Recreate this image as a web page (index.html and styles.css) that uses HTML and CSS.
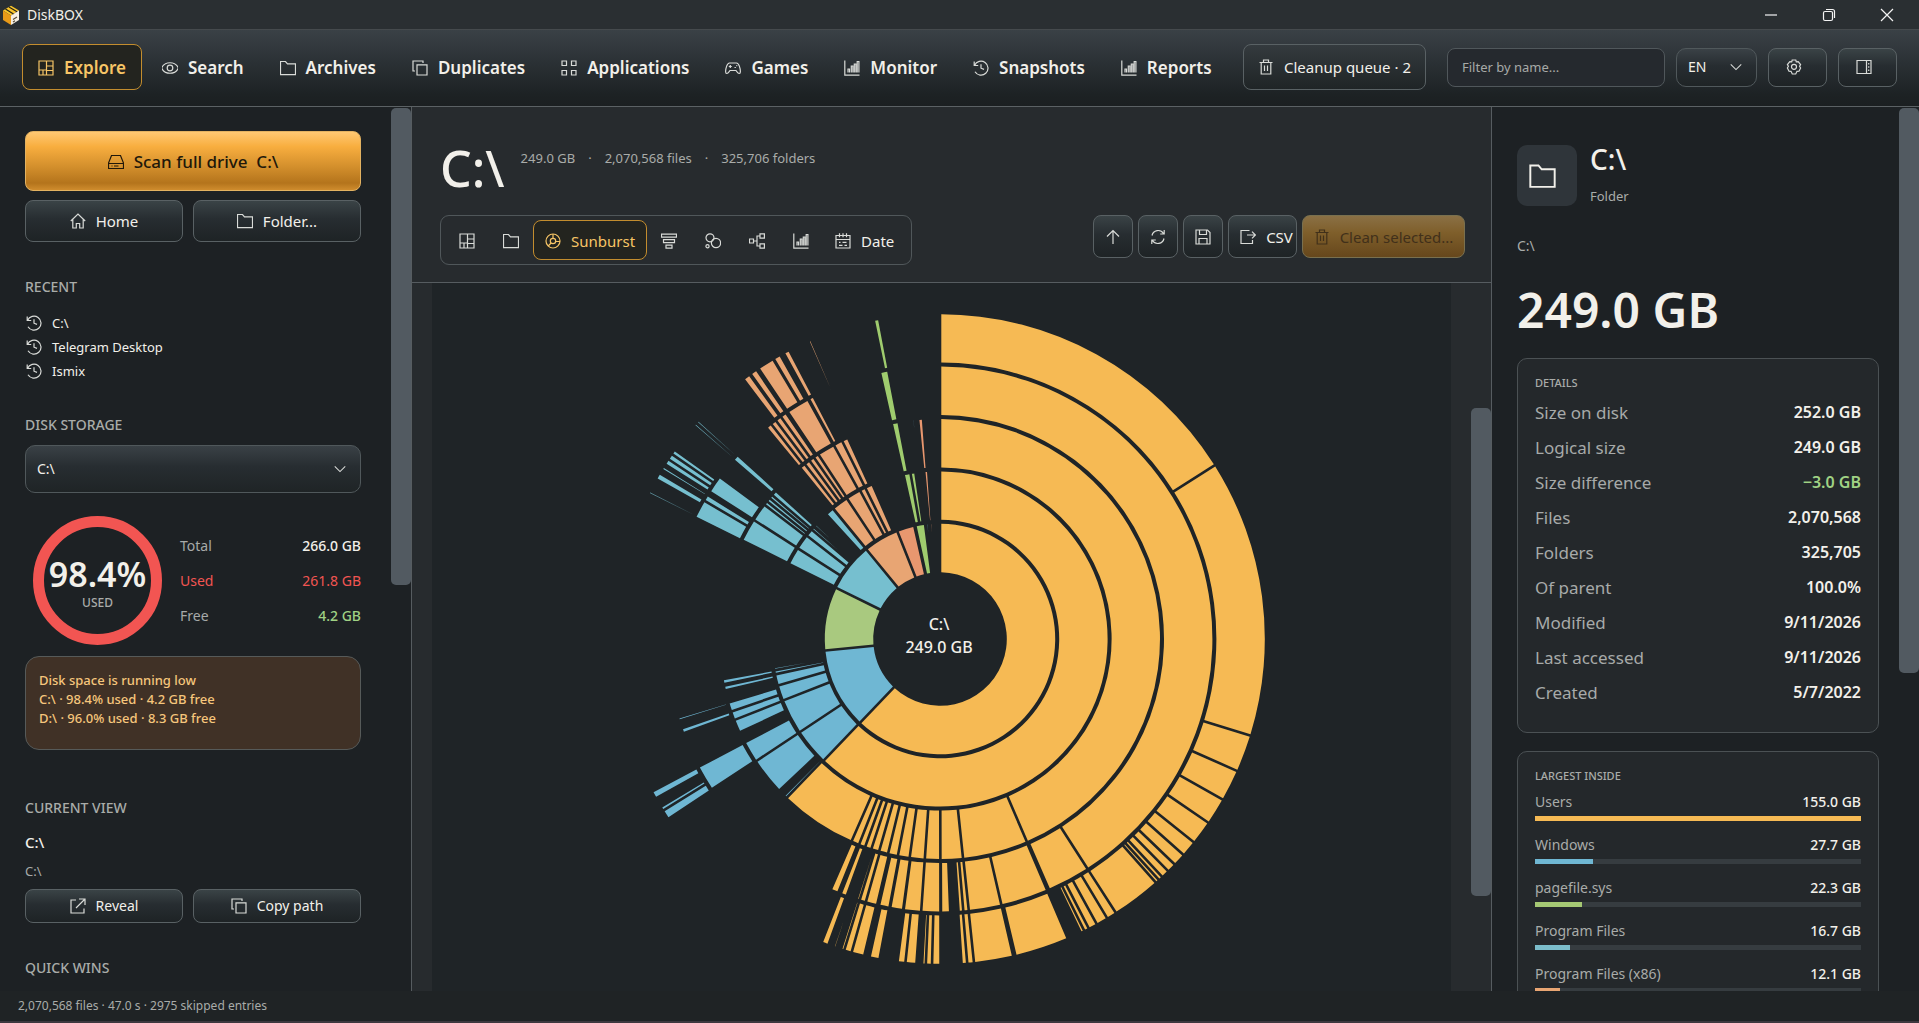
FILE: index.html
```html
<!DOCTYPE html>
<html lang="en">
<head>
<meta charset="utf-8">
<title>DiskBOX</title>
<link rel="stylesheet" href="styles.css">
<script src="sunburst.js" defer></script>
</head>
<body>
<svg class="sprite" aria-hidden="true">
  <symbol id="i-treemap" viewBox="0 0 16 16"><path d="M1 1h14v14H1zM8.500 1v14M1 10h7.500M8.500 6H15M5 10v5M8.500 10.500H15"/></symbol>
  <symbol id="i-eye" viewBox="0 0 16 16"><path d="M-.4 8C2.700 1 13.300 1 16.400 8 13.300 15 2.700 15-.4 8z"/><circle cx="8" cy="8" r="2.800"/></symbol>
  <symbol id="i-folder" viewBox="0 0 16 16"><path d="M.5 1.500h5l2 2.400h8v10.800H.5z"/></symbol>
  <symbol id="i-copy" viewBox="0 0 16 16"><path d="M5 4.800h10V15H5zM3 11H1V1h10v2"/></symbol>
  <symbol id="i-apps" viewBox="0 0 16 16"><path d="M1 1h4.500v4.500H1zM10.500 1H15v4.500h-4.500zM1 10.500h4.500V15H1zM10.500 10.500H15V15h-4.500z"/></symbol>
  <symbol id="i-game" viewBox="0 0 16 16"><path d="M4.500 3h7c2.500 0 3.800 5.500 3.900 8.500 0 2.600-2 2.600-3.400.3l-1-1.300H5l-1 1.300C2.600 14.100.6 14.100.6 11.500.7 8.500 2 3 4.500 3zM3.800 6.500h3M5.300 5v3M9.500 7.500h1.400M11.300 5.600h1"/></symbol>
  <symbol id="i-chart" viewBox="0 0 16 16"><path d="M.8.5v14.700H15.500M4 12.500V9h1.500v3.500M7.300 12.500V6h1.600v6.500M10.300 12.500V4h1.600v8.500M13.200 12.500V1.500h1.700v11"/></symbol>
  <symbol id="i-history" viewBox="0 0 16 16"><path d="M1.200 1.500v4h4M1.600 5.300A7 7 0 1 1 2 11.700M8 4.300V8.200l3 1.200"/></symbol>
  <symbol id="i-trash" viewBox="0 0 16 16"><path d="M1.500 3.500h13M5.500 3.300V1h5v2.300M3.200 3.500V15h9.600V3.500M6.500 6.500v5.500M9.500 6.500v5.500"/></symbol>
  <symbol id="i-gear" viewBox="0 0 16 16"><path d="M6.200 1h3.600l.5 1.800 1.900-.2 2.400 3-1 1.700 1 1.700-1.600 3.200-2 .1L9.700 15H6.300L5 12.300l-2-.1L1.400 9l1-1.700-1-1.700 2.400-3 1.900.2z"/><circle cx="8" cy="7.800" r="2.500"/></symbol>
  <symbol id="i-pane" viewBox="0 0 16 16"><path d="M1 1.500h14v13H1zM10.500 1.500v13M12.700 4v1.500M12.700 7.300v1.500M12.700 10.500V12"/></symbol>
  <symbol id="i-drive" viewBox="0 0 16 16"><path d="M3.500 1.500h9L15.500 9v5.500H.5V9zM.5 9.500h15M3.500 12h1M6 12h4.500"/></symbol>
  <symbol id="i-home" viewBox="0 0 16 16"><path d="M.8 8 8 1l7.200 7M2.800 6.500V15h3.500v-4.500h3.400V15h3.500V6.500"/></symbol>
  <symbol id="i-open" viewBox="0 0 16 16"><path d="M6 2H1v13h13v-4.500M9 1h6v6M15 1 6 10"/></symbol>
  <symbol id="i-sun" viewBox="0 0 16 16"><circle cx="8" cy="8" r="7"/><circle cx="8" cy="8" r="2.700"/><path d="M8 1v4.300M3.200 13l2.900-3M15 8.500h-4.300"/></symbol>
  <symbol id="i-funnel" viewBox="0 0 16 16"><path d="M.5 1.200h15v3H.5zM2.500 6.700h11v3h-11zM5 12.200h6v3H5z"/></symbol>
  <symbol id="i-bubbles" viewBox="0 0 16 16"><circle cx="5" cy="4.800" r="4"/><circle cx="11" cy="10" r="4.600"/><circle cx="2.500" cy="13.200" r="1.600"/></symbol>
  <symbol id="i-tree" viewBox="0 0 16 16"><path d="M.5 6h4v4h-4zM11 .8h4.400v4.400H11zM11 10.800h4.400v4.400H11zM4.500 8H8M11 3H8v10h3"/></symbol>
  <symbol id="i-cal" viewBox="0 0 16 16"><path d="M1 2.500h14V15H1zM1 6.500h14M4.500.2v4M8 .2v4M11.500.2v4M4 9.300h1.500M7.500 9.300h4M4 12.300h3.500M9.500 12.300H12"/></symbol>
  <symbol id="i-up" viewBox="0 0 16 16"><path d="M8 15V1.500M2 7.500l6-6 6 6"/></symbol>
  <symbol id="i-sync" viewBox="0 0 16 16"><path d="M2 6.500A6.300 6.300 0 0 1 13.500 4.500M14.200 1v4h-4M14 9.500A6.300 6.300 0 0 1 2.500 11.500M1.800 15v-4h4"/></symbol>
  <symbol id="i-save" viewBox="0 0 16 16"><path d="M1 1h11.500L15 3.500V15H1zM4.500 1v4.500h7V1M4 15V9.500h8V15"/></symbol>
  <symbol id="i-export" viewBox="0 0 16 16"><path d="M9.500 1.500H1v13h11.500V11M7 6h8.300M12 2.600 15.400 6 12 9.400"/></symbol>
  <symbol id="i-chev" viewBox="0 0 16 16"><path d="M2 5l6 6 6-6"/></symbol>
</svg>

<div class="titlebar">
  <svg class="logo" viewBox="0 0 18 20" aria-hidden="true">
    <path d="M1 5.500 9 .8l8 4.700L9 10.500z" fill="#f8c52c"/><path d="M1 5.500l8 5V20L1 15z" fill="#e99a18"/><path d="M17 5.500 9 10.500V20l8-5z" fill="#f6efe2"/>
    <path d="M3.500 4 11.500 9M7 2l8 4.800" stroke="#2a2415" stroke-width="1.200"/><path d="M11 14.500l4-2.500M11 17l2-1.300" stroke="#594a33" stroke-width="1.200"/>
  </svg>
  <span class="app-name">DiskBOX</span>
  <button class="win" aria-label="Minimize"><svg viewBox="0 0 14 14"><path d="M1 7h12"/></svg></button>
  <button class="win" aria-label="Restore"><svg viewBox="0 0 14 14"><rect x="1.500" y="3.500" width="9" height="9" rx="1.500"/><path d="M4 1.500h6.500a2 2 0 0 1 2 2V10"/></svg></button>
  <button class="win" aria-label="Close"><svg viewBox="0 0 14 14"><path d="M1 1l12 12M13 1 1 13"/></svg></button>
</div>

<header class="topbar">
  <nav class="nav">
    <a href="#" class="nav-item active"><svg class="icon"><use href="#i-treemap"/></svg>Explore</a>
    <a href="#" class="nav-item"><svg class="icon"><use href="#i-eye"/></svg>Search</a>
    <a href="#" class="nav-item"><svg class="icon"><use href="#i-folder"/></svg>Archives</a>
    <a href="#" class="nav-item"><svg class="icon"><use href="#i-copy"/></svg>Duplicates</a>
    <a href="#" class="nav-item"><svg class="icon"><use href="#i-apps"/></svg>Applications</a>
    <a href="#" class="nav-item"><svg class="icon"><use href="#i-game"/></svg>Games</a>
    <a href="#" class="nav-item"><svg class="icon"><use href="#i-chart"/></svg>Monitor</a>
    <a href="#" class="nav-item"><svg class="icon"><use href="#i-history"/></svg>Snapshots</a>
    <a href="#" class="nav-item"><svg class="icon"><use href="#i-chart"/></svg>Reports</a>
  </nav>
  <div class="tools">
    <button class="btn queue"><svg class="icon"><use href="#i-trash"/></svg>Cleanup queue · 2</button>
    <input class="filter" type="text" placeholder="Filter by name..." aria-label="Filter by name">
    <div class="select lang"><select aria-label="Language"><option>EN</option></select><svg class="icon chev"><use href="#i-chev"/></svg></div>
    <button class="btn square" aria-label="Settings"><svg class="icon"><use href="#i-gear"/></svg></button>
    <button class="btn square" aria-label="Toggle details"><svg class="icon"><use href="#i-pane"/></svg></button>
  </div>
</header>

<main class="main">
  <aside class="sidebar">
    <div class="side-content">
      <button class="scan"><svg class="icon"><use href="#i-drive"/></svg>Scan full drive&nbsp; C:\</button>
      <div class="pair">
        <button class="btn"><svg class="icon"><use href="#i-home"/></svg>Home</button>
        <button class="btn"><svg class="icon"><use href="#i-folder"/></svg>Folder...</button>
      </div>
      <h2 class="label recent-label">RECENT</h2>
      <ul class="recent">
        <li><svg class="icon"><use href="#i-history"/></svg>C:\</li>
        <li><svg class="icon"><use href="#i-history"/></svg>Telegram Desktop</li>
        <li><svg class="icon"><use href="#i-history"/></svg>Ismix</li>
      </ul>
      <h2 class="label disk-label">DISK STORAGE</h2>
      <div class="select drive"><select aria-label="Drive"><option>C:\</option></select><svg class="icon chev"><use href="#i-chev"/></svg></div>
      <div class="storage">
        <div class="donut"><b>98.4%</b><span>USED</span></div>
        <dl class="usage">
          <div><dt>Total</dt><dd>266.0 GB</dd></div>
          <div class="used"><dt>Used</dt><dd>261.8 GB</dd></div>
          <div class="free"><dt>Free</dt><dd>4.2 GB</dd></div>
        </dl>
      </div>
      <div class="warning">Disk space is running low<br>C:\ · 98.4% used · 4.2 GB free<br>D:\ · 96.0% used · 8.3 GB free</div>
      <h2 class="label view-label">CURRENT VIEW</h2>
      <p class="view-name">C:\</p>
      <p class="view-path">C:\</p>
      <div class="pair small">
        <button class="btn"><svg class="icon"><use href="#i-open"/></svg>Reveal</button>
        <button class="btn"><svg class="icon"><use href="#i-copy"/></svg>Copy path</button>
      </div>
      <h2 class="label wins-label">QUICK WINS</h2>
    </div>
    <div class="scroll"><i class="thumb side-thumb"></i></div>
  </aside>

  <section class="center">
    <div class="center-head">
      <div class="title-row">
        <h1>C:\</h1>
        <p class="meta"><span>249.0 GB</span><span>·</span><span>2,070,568 files</span><span>·</span><span>325,706 folders</span></p>
      </div>
      <div class="tool-row">
        <div class="tabs">
          <button class="tab" aria-label="Treemap"><svg class="icon"><use href="#i-treemap"/></svg></button>
          <button class="tab" aria-label="Folders"><svg class="icon"><use href="#i-folder"/></svg></button>
          <button class="tab wide active"><svg class="icon"><use href="#i-sun"/></svg>Sunburst</button>
          <button class="tab" aria-label="Icicle"><svg class="icon"><use href="#i-funnel"/></svg></button>
          <button class="tab" aria-label="Bubbles"><svg class="icon"><use href="#i-bubbles"/></svg></button>
          <button class="tab" aria-label="Tree"><svg class="icon"><use href="#i-tree"/></svg></button>
          <button class="tab" aria-label="Chart"><svg class="icon"><use href="#i-chart"/></svg></button>
          <button class="tab wide"><svg class="icon"><use href="#i-cal"/></svg>Date</button>
        </div>
        <div class="actions">
          <button class="btn act" aria-label="Up"><svg class="icon"><use href="#i-up"/></svg></button>
          <button class="btn act" aria-label="Refresh"><svg class="icon"><use href="#i-sync"/></svg></button>
          <button class="btn act" aria-label="Save"><svg class="icon"><use href="#i-save"/></svg></button>
          <button class="btn act csv"><svg class="icon"><use href="#i-export"/></svg>CSV</button>
          <button class="clean" disabled><svg class="icon"><use href="#i-trash"/></svg>Clean selected...</button>
        </div>
      </div>
    </div>
    <div class="center-body">
      <div class="canvas">
        <svg class="sunburst" viewBox="-330 -330 660 660" role="img" aria-label="Sunburst of C:\">
          <g id="rings"></g>
          <text x="-1" y="-9">C:\</text>
          <text x="-1" y="14">249.0 GB</text>
        </svg>
      </div>
      <div class="scroll"><i class="thumb center-thumb"></i></div>
    </div>
  </section>

  <aside class="details">
    <div class="detail-content">
      <div class="item-head">
        <div class="tile"><svg class="icon"><use href="#i-folder"/></svg></div>
        <div><h2 class="item-name">C:\</h2><p class="item-kind">Folder</p></div>
      </div>
      <p class="item-path">C:\</p>
      <p class="item-size">249.0 GB</p>
      <section class="card">
        <h3>DETAILS</h3>
        <dl class="facts">
          <div><dt>Size on disk</dt><dd>252.0 GB</dd></div>
          <div><dt>Logical size</dt><dd>249.0 GB</dd></div>
          <div class="free"><dt>Size difference</dt><dd>−3.0 GB</dd></div>
          <div><dt>Files</dt><dd>2,070,568</dd></div>
          <div><dt>Folders</dt><dd>325,705</dd></div>
          <div><dt>Of parent</dt><dd>100.0%</dd></div>
          <div><dt>Modified</dt><dd>9/11/2026</dd></div>
          <div><dt>Last accessed</dt><dd>9/11/2026</dd></div>
          <div><dt>Created</dt><dd>5/7/2022</dd></div>
        </dl>
      </section>
      <section class="card">
        <h3>LARGEST INSIDE</h3>
        <ul class="largest">
          <li><span>Users</span><b>155.0 GB</b><div class="bar"><i class="amber" style="width:100%"></i></div></li>
          <li><span>Windows</span><b>27.7 GB</b><div class="bar"><i class="blue" style="width:17.9%"></i></div></li>
          <li><span>pagefile.sys</span><b>22.3 GB</b><div class="bar"><i class="green" style="width:14.4%"></i></div></li>
          <li><span>Program Files</span><b>16.7 GB</b><div class="bar"><i class="teal" style="width:10.8%"></i></div></li>
          <li><span>Program Files (x86)</span><b>12.1 GB</b><div class="bar"><i class="peach" style="width:7.8%"></i></div></li>
        </ul>
      </section>
    </div>
    <div class="scroll"><i class="thumb detail-thumb"></i></div>
  </aside>
</main>

<footer class="status">2,070,568 files · 47.0 s · 2975 skipped entries</footer>
</body>
</html>
```
FILE: styles.css
```css
* { box-sizing: border-box; margin: 0; padding: 0; }
html, body { height: 100%; }
body {
  display: flex;
  flex-direction: column;
  overflow: hidden;
  background: #1f2427;
  color: #f2f0ea;
  font: 14px/20px "Noto Sans", "Open Sans", sans-serif;
}
button, input, select { font: inherit; color: inherit; }
ul { list-style: none; }
.sprite { position: absolute; width: 0; height: 0; }
.icon {
  flex: none;
  width: 16px;
  height: 16px;
  fill: none;
  stroke: currentColor;
  stroke-width: 1.2;
  overflow: visible;
  color: #d9dbd8;
}
.active .icon, .scan .icon, .clean .icon { color: inherit; }

.titlebar { flex: none; display: flex; align-items: center; height: 29px; padding: 0 3px 0 2px; background: #2a2f32; }
.logo { width: 18px; height: 20px; }
.app-name { flex: 1; margin-left: 7px; font-size: 14px; }
.win { width: 58px; height: 28px; display: grid; place-items: center; background: none; border: 0; }
.win svg { width: 14px; height: 14px; fill: none; stroke: #f4f4f4; stroke-width: 1.2; }

.topbar {
  flex: none;
  display: flex;
  align-items: center;
  justify-content: space-between;
  height: 78px;
  padding: 0 22px;
  border-top: 1px solid #454a4d;
  border-bottom: 1px solid #5b6164;
  background: linear-gradient(#3a4146, #2a3034 45%, #1d2224 85%, #1b1f21);
}
.nav { display: flex; gap: 4px; }
.nav-item {
  display: flex;
  align-items: center;
  gap: 10px;
  height: 46px;
  padding: 2px 15px 0;
  border: 1px solid transparent;
  border-radius: 8px;
  color: #f2f0ea;
  font-size: 17px;
  font-weight: 600;
  text-decoration: none;
}
.nav-item.active { background: #23241f; border-color: #c38d2e; color: #f7c566; }
.tools { display: flex; align-items: center; gap: 11px; }
.nav, .tools { margin-top: -2px; }
.btn {
  display: flex;
  align-items: center;
  justify-content: center;
  gap: 10px;
  border: 1px solid #596164;
  border-radius: 8px;
  background: linear-gradient(#3a4346, #272d31 45%, #1e2325);
}
.queue { width: 183px; height: 46px; margin-right: 10px; font-size: 15px; background: linear-gradient(#343a3e, #1f2426); }
.filter {
  width: 218px;
  height: 39px;
  padding: 0 14px;
  border: 1px solid #50575b;
  border-radius: 8px;
  background: #25292e;
  font-size: 13px;
}
.filter::placeholder { color: #a7a9a7; opacity: 1; }
.select { position: relative; }
.select select {
  appearance: none;
  width: 100%;
  height: 100%;
  padding: 0 11px;
  border: 1px solid #50585b;
  border-radius: 10px;
  background: linear-gradient(#3a4146, #272d31 45%, #1f2426);
  font-size: 14px;
}
.chev { position: absolute; right: 14px; top: 50%; width: 14px; height: 14px; margin-top: -7px; pointer-events: none; }
.lang { width: 81px; height: 39px; }
.square { width: 59px; height: 39px; padding-right: 8px; }

.main { flex: 1; min-height: 0; display: flex; }
.scroll { flex: none; width: 20px; padding-top: 1px; }
.thumb { display: block; border-radius: 5px; background: #525a61; }

.sidebar { flex: none; width: 412px; display: flex; overflow: hidden; background: #1d2124; border-right: 1px solid #565c60; }
.side-content { flex: 1; min-width: 0; padding: 24px 30px 0 25px; }
.side-thumb { height: 54%; }
.scan {
  display: flex;
  align-items: center;
  justify-content: center;
  gap: 10px;
  width: 100%;
  height: 60px;
  padding-top: 2px;
  border: 1px solid #e3b261;
  border-radius: 8px;
  background: linear-gradient(#ffc873, #f8ae3f 25%, #d38f2c 60%, #b4741c 88%, #cf8c2d);
  color: #21180a;
  font-size: 17px;
  font-weight: 500;
}
.pair { display: grid; grid-template-columns: 158fr 168fr; gap: 10px; margin-top: 9px; }
.pair .btn { height: 42px; font-size: 15px; }
.pair.small .btn { height: 34px; font-size: 14px; }
.label { color: #a9aca9; font-size: 14px; font-weight: 500; line-height: 20px; }
.recent-label { margin-top: 35px; }
.recent { margin-top: 14px; }
.recent li { display: flex; align-items: center; gap: 10px; height: 24px; padding-left: 1px; font-size: 13px; }
.disk-label { margin-top: 32px; }
.drive { height: 48px; margin-top: 10px; }
.storage { display: flex; align-items: center; margin-top: 23px; padding-left: 8px; gap: 18px; }
.donut {
  flex: none;
  display: flex;
  flex-direction: column;
  align-items: center;
  justify-content: center;
  width: 129px;
  height: 129px;
  padding-top: 8px;
  border: 11px solid #f25552;
  border-radius: 50%;
}
.donut b { font-size: 34px; line-height: 36px; font-weight: 600; }
.donut span { color: #a9aca9; font-size: 12px; line-height: 22px; font-weight: 500; }
.usage { flex: 1; display: grid; gap: 15px; font-size: 14px; }
.usage div, .facts div { display: flex; justify-content: space-between; }
.usage dt, .facts dt { color: #a7aaa9; }
.usage dd { font-weight: 500; }
.usage .used dt, .usage .used dd { color: #f25552; font-weight: 400; }
.usage .free dd, .facts .free dd { color: #a0d284; }
.warning {
  height: 94px;
  margin-top: 11px;
  padding: 14px 13px;
  border: 1px solid #565a59;
  border-radius: 14px;
  background: #403126;
  color: #f6c67c;
  font-size: 13px;
  font-weight: 500;
  line-height: 19px;
}
.view-label { margin-top: 48px; }
.view-name { margin-top: 14px; font-size: 15px; font-weight: 500; }
.view-path { margin-top: 9px; color: #a7aaa9; font-size: 13px; }
.pair.small { margin-top: 8px; }
.wins-label { margin-top: 35px; }

.center { flex: 1; min-width: 0; display: flex; flex-direction: column; background: #272b2e; }
.center-head { flex: none; height: 176px; padding: 33px 26px 0 28px; border-bottom: 1px solid #565c60; }
.title-row { display: flex; gap: 16px; height: 75px; }
h1 { font-size: 50px; line-height: 56px; font-weight: 500; }
.meta { display: flex; gap: 13px; padding-top: 8px; color: #a9aca9; font-size: 13px; }
.tool-row { display: flex; justify-content: space-between; align-items: flex-start; }
.tabs { display: flex; align-items: center; height: 50px; padding: 0 5px 0 4px; border: 1px solid #50575a; border-radius: 9px; }
.tab { display: flex; align-items: center; justify-content: center; gap: 10px; width: 44px; height: 40px; padding-top: 2px; border: 1px solid transparent; border-radius: 8px; background: none; font-size: 15px; }
.tab.wide { width: auto; padding: 2px 11px 0; }
.tab.active { background: #23241f; border-color: #c38d2e; color: #f7c566; }
.actions { display: flex; gap: 5px; }
.act { width: 40px; height: 43px; }
.csv { width: 69px; padding-left: 8px; font-size: 15px; }
.clean {
  display: flex;
  align-items: center;
  justify-content: center;
  gap: 10px;
  width: 163px;
  height: 43px;
  border: 1px solid #79704f;
  border-radius: 8px;
  background: linear-gradient(#8a7045, #7f5f2b 40%, #66471c);
  color: #41301a;
  font-size: 15px;
}
.center-body { flex: 1; min-height: 0; display: flex; }
.canvas { flex: 1; min-width: 0; margin: 0 20px; display: flex; justify-content: center; align-items: center; padding: 4px 3px 0 0; background: #1f2427; }
.sunburst { flex: none; width: 660px; height: 660px; }
.sunburst text { fill: #f2f0ea; font-size: 16px; font-weight: 500; text-anchor: middle; }
.center-thumb { height: 69%; margin-top: 124px; }

.details { flex: none; width: 428px; display: flex; overflow: hidden; background: #1d2124; border-left: 1px solid #565c60; }
.detail-content { flex: 1; min-width: 0; padding: 38px 20px 0 25px; }
.detail-thumb { height: 64%; }
.item-head { display: flex; gap: 13px; }
.tile { display: grid; place-items: center; width: 60px; height: 61px; padding-right: 9px; border-radius: 10px; background: #2f353a; }
.tile .icon { width: 29px; height: 26px; stroke-width: 1.2; color: #f2f0ea; }
.item-name { font-size: 28px; line-height: 32px; font-weight: 500; margin-top: -2px; }
.item-kind { margin-top: 11px; color: #a9aca9; font-size: 13px; }
.item-path { margin-top: 30px; color: #a9aca9; font-size: 14px; }
.item-size { margin-top: 24px; font-size: 48px; line-height: 60px; font-weight: 600; }
.card { margin-top: 18px; padding: 14px 17px 22px; border: 1px solid #4b5154; border-radius: 10px; background: #24282b; }
.card h3 { color: #a9aca9; font-size: 11px; line-height: 20px; font-weight: 500; }
.facts { font-size: 17px; line-height: 35px; margin-top: 2px; }
.facts dd { font-weight: 600; font-size: 16px; }
.largest li { display: grid; grid-template-columns: 1fr auto; height: 43px; align-content: start; font-size: 14px; line-height: 20px; padding-top: 6px; }
.largest span { color: #a9aca9; }
.largest b { font-weight: 500; }
.bar { grid-column: 1 / 3; height: 5px; margin-top: 4px; background: #363c40; }
.bar i { display: block; height: 100%; }
.amber { background: #f6ba54; }
.blue { background: #6fb7d3; }
.green { background: #a5c873; }
.teal { background: #7bbcca; }
.peach { background: #e8a573; }

.status { flex: none; height: 32px; padding: 5px 18px; color: #a9aca9; font-size: 12px; line-height: 20px; background: #1f2325; border-bottom: 2px solid #3d383f; }
```
FILE: sunburst.js
```js
// Rings of the folder tree. Each entry: [start, end, colour], degrees clockwise from the top.
const A = "#f6ba54", B = "#6fb7d3", T = "#76bfcf", L = "#a9c97f", G = "#9fcc6e", P = "#e8a573", C = "#e8976f";

// Expands a list of dividers into adjoining segments.
const run = (color, ...stops) => stops.slice(1).map((end, i) => [stops[i], end, color]);

const rings = [
  [
    ...run(A, 0, 223.7), ...run(B, 223.7, 264.25), ...run(L, 264.25, 296.2), ...run(T, 296.2, 320.6),
    ...run(P, 320.6, 338.4), ...run(C, 338.4, 347.2), ...run(G, 347.7, 352.6),
    ...run(B, 353, 354.4), ...run(C, 354.9, 356.3),
  ],
  [
    ...run(A, 0, 223.75), ...run(B, 223.75, 236.4, 248.6, 254, 257.9, 259.3, 260.4), ...run(B, 263.3, 263.95),
    ...run(T, 296.4, 302.5, 307.8, 310.5, 311.6), ...run(T, 311.9, 312.9), ...run(T, 317.6, 320.6),
    ...run(P, 320.7, 326.5, 331.7, 333.7, 336.4), ...run(G, 347.5, 349.9, 351.6), ...run(C, 354.6, 356),
  ],
  [
    ...run(A, 0, 156.8, 174, 179.9, 183.95, 187.9, 191, 193.6, 196, 198.1, 199.8, 201.5, 203.6, 224),
    ...run(B, 224, 224.9), ...run(B, 226.65, 236.4, 242.1), ...run(B, 245, 248.5, 250.8, 253.3),
    ...run(B, 256.5, 257.8), ...run(B, 258.2, 259.5),
    ...run(T, 296.5, 302.6, 307.4, 308.5, 309.6, 310.6, 312.1),
    ...run(P, 320.75, 322.3, 323.8, 325.2, 326.6, 331.3, 333.7, 335.4),
    ...run(G, 347.35, 349.2), ...run(B, 352.7, 353.4), ...run(C, 354.3, 355.6),
  ],
  [
    ...run(A, 0, 147.3, 156.5), ...run(A, 156.9, 167, 173.95, 175.1, 176.1), ...run(A, 177.85, 179.8),
    ...run(A, 179.9, 183.95, 187.65), ...run(A, 187.75, 190.5), ...run(A, 190.65, 192.9),
    ...run(A, 193.3, 195.75, 197.1, 197.75), ...run(A, 198, 198.55), ...run(A, 199.95, 201.3), ...run(A, 201.85, 203.55),
    ...run(B, 236.6, 242.1), ...run(B, 249.8, 250.9), ...run(B, 252.6, 253.3),
    ...run(T, 296.4, 300.4, 301.8), ...run(T, 302.6, 306.35), ...run(T, 310.9, 312.3),
    ...run(P, 320.6, 321.85, 323.1, 324.4, 325.75), ...run(P, 326.15, 331.15), ...run(P, 331.35, 332.45),
    ...run(P, 336, 336.55), ...run(G, 347.3, 349.1),
  ],
  [
    ...run(A, 0, 57.7, 107.3, 113.95, 119.6, 124.4, 128.7, 131.55, 133.85, 135.5, 136.95, 137.75, 138.45, 147.3, 149.1, 151.2, 152.8, 153.7, 154.4),
    ...run(A, 156.9, 166.6), ...run(A, 167, 174, 175.2, 176.2),
    ...run(A, 179.9, 181.4, 182.5, 183.15), ...run(A, 184.15, 186.1, 187.5), ...run(A, 190.7, 192.5),
    ...run(A, 193.45, 195.75, 197.1, 197.7), ...run(A, 198.6, 199.1), ...run(A, 200.05, 201.3),
    ...run(B, 236.5, 238.2, 239), ...run(B, 240.7, 242.1),
    ...run(T, 296.5, 297.05), ...run(T, 299.4, 300.6), ...run(T, 301.35, 302), ...run(T, 302.45, 303.5, 304.6, 305.5),
    ...run(T, 310.95, 311.5), ...run(T, 311.65, 312.2),
    ...run(P, 322.9, 324.25), ...run(P, 324.45, 325.75), ...run(P, 326.15, 329.2), ...run(P, 329.3, 330.65),
    ...run(P, 331.35, 332.45), ...run(P, 336.15, 336.7), ...run(G, 348.25, 349.25),
  ],
];

const OUTER = 115.2, PITCH = 52.4, THICK = 48.4, HALF_GAP = 1.3;
const point = (r, a) => `${(r * Math.sin(a)).toFixed(2)} ${(-r * Math.cos(a)).toFixed(2)}`;

function segment(level, [start, end, color]) {
  const R = OUTER + PITCH * level;
  const a = start * Math.PI / 180, b = end * Math.PI / 180;
  // Slivers too thin for the gap taper off to a point before the inner edge.
  const r = Math.max(R - THICK, 2 * HALF_GAP / (b - a));
  if (r >= R) return "";
  const wide = b - a > Math.PI ? 1 : 0;
  const o = HALF_GAP / R, i = HALF_GAP / r;
  return `<path fill="${color}" d="M${point(R, a + o)}A${R} ${R} 0 ${wide} 1 ${point(R, b - o)}` +
    `L${point(r, b - i)}A${r} ${r} 0 ${wide} 0 ${point(r, a + i)}Z"/>`;
}

document.getElementById("rings").innerHTML =
  rings.map((list, level) => list.map(s => segment(level, s)).join("")).join("");
```
